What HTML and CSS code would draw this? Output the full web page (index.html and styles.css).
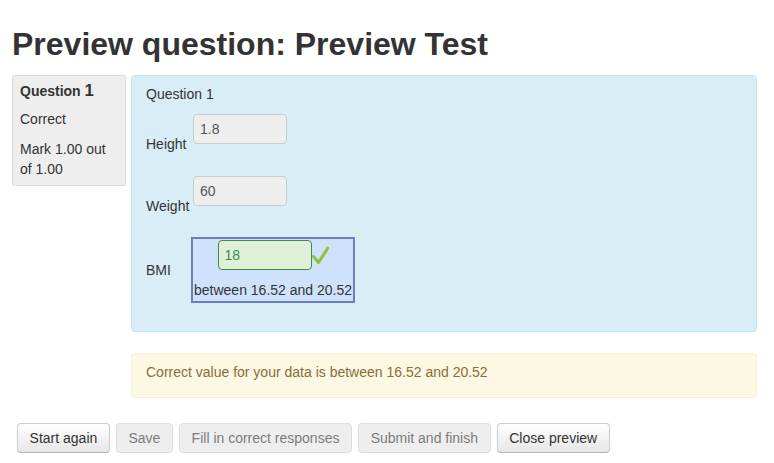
FILE: index.html
```html
<!DOCTYPE html>
<html>
<head>
<meta charset="utf-8">
<link rel="stylesheet" href="styles.css">
</head>
<body>
<div class="page">
  <h2 class="title">Preview question: Preview Test</h2>
  <div class="que">
    <div class="info">
      <h3 class="no">Question <span class="qno">1</span></h3>
      <div class="state">Correct</div>
      <div class="grade">Mark 1.00 out of 1.00</div>
    </div>
    <div class="content">
      <div class="formulation">
        <div class="qtext">Question 1</div>
        <div class="row row-first">
          <span class="lbl">Height</span>
          <span class="field">1.8</span>
        </div>
        <div class="row row-second">
          <span class="lbl">Weight</span>
          <span class="field">60</span>
        </div>
        <div class="row row-bmi">
          <span class="lbl lbl-bmi">BMI</span>
          <div class="answerbox">
            <div class="ansline">
              <span class="field correct">18</span>
              <svg class="tick" width="17" height="19" viewBox="0 0 17 19"><path d="M1.5 10.5 L6.5 16.5 L15.8 2" fill="none" stroke="#8cc43c" stroke-width="3" stroke-linecap="round" stroke-linejoin="round"/></svg>
            </div>
            <div class="feedback">between 16.52 and 20.52</div>
          </div>
        </div>
      </div>
      <div class="outcome">Correct value for your data is between 16.52 and 20.52</div>
    </div>
  </div>
  <div class="buttons">
    <button class="btn">Start again</button>
    <button class="btn disabled">Save</button>
    <button class="btn disabled">Fill in correct responses</button>
    <button class="btn disabled">Submit and finish</button>
    <button class="btn">Close preview</button>
  </div>
</div>
</body>
</html>
```
FILE: styles.css
```css
body {
  margin: 0;
  font-family: "Liberation Sans", Arial, sans-serif;
  font-size: 14px;
  line-height: 20px;
  color: #333;
  background: #fff;
}

.page {
  padding: 24px 17px 0 12px;
}

.title {
  margin: 0 0 11px 0;
  font-size: 32px;
  line-height: 40px;
  font-weight: bold;
  color: #333;
}

.que {
  display: flex;
  align-items: flex-start;
  gap: 5px;
}

.info {
  box-sizing: border-box;
  width: 114px;
  flex: none;
  padding: 5px 7px 6px;
  background: #eeeeee;
  border: 1px solid #dcdcdc;
  border-radius: 2px;
}

.no {
  margin: 0 0 8px;
  font-size: 14px;
  line-height: 20px;
  font-weight: bold;
}

.qno {
  font-size: 1.2em;
  line-height: 1;
}

.state {
  margin-bottom: 10px;
}

.content {
  flex: 1;
}

.formulation {
  background: #d9edf7;
  border: 1px solid #bce8f1;
  border-radius: 4px;
  padding: 8px 14px 28px;
}

.row {
  display: flex;
  align-items: flex-end;
}

.row-first {
  margin-top: 10px;
}

.row-second {
  margin-top: 23px;
}

.row-bmi {
  margin-top: 22px;
  align-items: center;
}

.lbl {
  width: 47px;
  flex: none;
}

.row-first .lbl,
.row-second .lbl {
  position: relative;
  top: 1px;
}

.lbl-bmi {
  width: 45px;
}

.row-first .field,
.row-second .field {
  margin-bottom: 9px;
}

.field {
  display: block;
  box-sizing: border-box;
  width: 94px;
  height: 30px;
  padding: 4px 6px;
  border: 1px solid #cccccc;
  border-radius: 4px;
  background: #eeeeee;
  color: #555;
}

.field.correct {
  background: #dff0d8;
  border-color: #468847;
  color: #468847;
}

.answerbox {
  display: flex;
  flex-direction: column;
  align-items: center;
  padding: 1px 1px 1px;
  border: 2px solid #6f7cbf;
  background: #cfe2fc;
}

.ansline {
  display: flex;
  align-items: center;
  margin-bottom: 10px;
}

.tick {
  display: block;
}

.outcome {
  margin-top: 21px;
  background: #fcf8e3;
  border: 1px solid #fbeed5;
  border-radius: 4px;
  padding: 8px 14px 15px;
  color: #8a6d3b;
}

.buttons {
  display: flex;
  gap: 6px;
  margin-top: 25px;
  padding-left: 5px;
}

.btn {
  font-family: "Liberation Sans", Arial, sans-serif;
  font-size: 14px;
  line-height: 20px;
  padding: 4px 11.6px;
  margin: 0;
  color: #333;
  border: 1px solid #cccccc;
  border-bottom-color: #b3b3b3;
  border-radius: 4px;
  background: linear-gradient(#ffffff, #e6e6e6);
  box-shadow: inset 0 1px 0 rgba(255, 255, 255, 0.2), 0 1px 2px rgba(0, 0, 0, 0.05);
}

.btn.disabled {
  background: #e6e6e6;
  opacity: 0.65;
  box-shadow: none;
  border-bottom-color: #cccccc;
}
```
